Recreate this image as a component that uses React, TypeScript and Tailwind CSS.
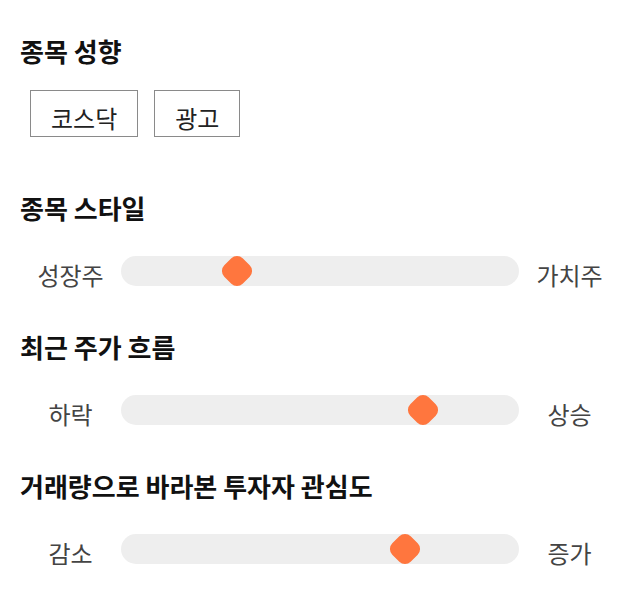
const FONT = "font-['Noto_Sans_CJK_KR','Noto_Sans',sans-serif]";

const TAGS = ['코스닥', '광고'];

const SLIDERS = [
  { title: '종목 스타일', left: '성장주', right: '가치주', pos: 29.1 },
  { title: '최근 주가 흐름', left: '하락', right: '상승', pos: 76 },
  { title: '거래량으로 바라본 투자자 관심도', left: '감소', right: '증가', pos: 71.4 },
];

function Slider({ left, right, pos }: { left: string; right: string; pos: number }) {
  return (
    <div className="flex items-center h-[30px]">
      <div className="w-[101px] text-center text-[24px] leading-[30px] pt-[7px] text-[#444]">{left}</div>
      <div className="relative w-[398px] h-[30px] rounded-full bg-[#eeeeee]">
        <div
          className="absolute top-1/2 w-[26px] h-[26px] -translate-x-1/2 -translate-y-1/2 rotate-45 rounded-[8px] bg-[#ff763e]"
          style={{ left: `${pos}%` }}
        />
      </div>
      <div className="w-[101px] text-center text-[24px] leading-[30px] pt-[7px] text-[#444]">{right}</div>
    </div>
  );
}

export default function App() {
  return (
    <div className={`${FONT} w-[640px] h-[606px] bg-white px-5 pt-[35px]`}>
      <h2 className="text-[26px] font-bold leading-[32px] text-[#111]">종목 성향</h2>
      <div className="flex gap-4 ml-[10px] mt-[23px]">
        {TAGS.map((t) => (
          <div
            key={t}
            className="h-[47px] px-[20px] pt-[9px] border border-[#8a8a8a] text-[24px] leading-[36px] text-[#222]"
          >
            {t}
          </div>
        ))}
      </div>

      {SLIDERS.map((s, i) => (
        <div key={s.title} className={i === 0 ? 'mt-[55px]' : 'mt-[45px]'}>
          <h2 className="text-[26px] font-bold leading-[32px] text-[#111]">{s.title}</h2>
          <div className="mt-[32px]">
            <Slider left={s.left} right={s.right} pos={s.pos} />
          </div>
        </div>
      ))}
    </div>
  );
}
